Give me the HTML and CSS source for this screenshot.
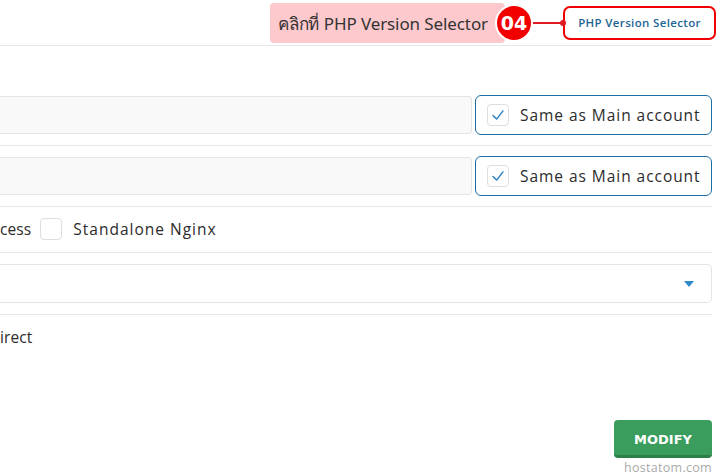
FILE: index.html
```html
<!DOCTYPE html>
<html lang="th">
<head>
<meta charset="utf-8">
<title>PHP Version Selector</title>
<link rel="stylesheet" href="styles.css">
</head>
<body>
<div class="page">
  <div class="header">
    <div class="note">คลิกที่ PHP Version Selector</div>
    <div class="step">04</div>
    <div class="connector"><span class="dot"></span></div>
    <button class="php-btn">PHP Version Selector</button>
  </div>

  <div class="form">
    <div class="row">
      <div class="field"></div>
      <label class="same">
        <span class="box checked"><svg viewBox="0 0 22 22" width="22" height="22"><path d="M5.5 11.5 L9.5 15.5 L16.5 6.5" fill="none" stroke="#2a7fbf" stroke-width="1.6" stroke-linecap="round" stroke-linejoin="round"/></svg></span>
        <span class="same-text">Same as Main account</span>
      </label>
    </div>
    <div class="row">
      <div class="field"></div>
      <label class="same">
        <span class="box checked"><svg viewBox="0 0 22 22" width="22" height="22"><path d="M5.5 11.5 L9.5 15.5 L16.5 6.5" fill="none" stroke="#2a7fbf" stroke-width="1.6" stroke-linecap="round" stroke-linejoin="round"/></svg></span>
        <span class="same-text">Same as Main account</span>
      </label>
    </div>
    <div class="row row-opts">
      <span class="label short">cess</span>
      <span class="box"></span>
      <span class="label">Standalone Nginx</span>
    </div>
    <div class="row row-select">
      <div class="select"><span class="caret"></span></div>
    </div>
    <div class="row row-last">
      <span class="label short">irect</span>
    </div>
  </div>

  <div class="actions">
    <button class="modify">MODIFY</button>
  </div>
  <div class="brand">hostatom.com</div>
</div>
</body>
</html>
```

FILE: styles.css
```css
html, body {
  margin: 0;
  padding: 0;
  background: #ffffff;
}
body {
  font-family: "Open Sans", "Noto Sans", "DejaVu Sans", sans-serif;
  color: #2b2b2b;
  width: 720px;
  height: 476px;
  overflow: hidden;
}
.page {
  width: 712px;
}
.header {
  height: 45px;
  border-bottom: 1px solid #e7e7e7;
  display: flex;
  align-items: center;
  justify-content: flex-end;
}
.note {
  height: 40px;
  margin-top: 1px;
  background: #fdc9cd;
  border-radius: 4px;
  padding: 0 17px 0 8px;
  display: flex;
  align-items: center;
  font-family: "Noto Sans", "DejaVu Sans", sans-serif;
  font-size: 17px;
  letter-spacing: -0.1px;
  color: #333;
}
.step {
  width: 34px;
  height: 34px;
  margin-left: -10px;
  border: 2px solid #ffffff;
  border-radius: 50%;
  background: #f20000;
  color: #fff;
  font-family: "DejaVu Sans", sans-serif;
  font-weight: bold;
  font-size: 19px;
  display: flex;
  align-items: center;
  justify-content: center;
  position: relative;
}
.connector {
  width: 30px;
  height: 2px;
  background: #e01b24;
  position: relative;
}
.dot {
  position: absolute;
  right: -3px;
  top: -2px;
  width: 6px;
  height: 6px;
  border-radius: 50%;
  background: #e01b24;
}
.php-btn {
  margin-right: -4px;
  width: 153px;
  height: 34px;
  border: 2px solid #f00000;
  border-radius: 7px;
  background: #fff;
  color: #1d6494;
  font-family: "Open Sans", sans-serif;
  font-size: 11.5px;
  letter-spacing: 0.35px;
  font-weight: 600;
  padding: 0;
}
.form {
  padding-top: 39px;
}
.row {
  display: flex;
  align-items: center;
  padding: 10px 0;
  border-bottom: 1px solid #e8e8e8;
}
.field {
  flex: 1;
  height: 36px;
  background: #f9f9f9;
  border: 1px solid #e4e4e4;
  border-left: none;
  border-radius: 0 4px 4px 0;
}
.same {
  margin-left: 3px;
  width: 237px;
  height: 40px;
  box-sizing: border-box;
  border: 1px solid #1c6ea4;
  border-radius: 6px;
  display: flex;
  align-items: center;
  padding-left: 11px;
}
.box {
  width: 20px;
  height: 20px;
  border: 1px solid #dedede;
  border-radius: 4px;
  background: #fff;
  display: inline-flex;
  align-items: center;
  justify-content: center;
  flex: none;
}
.box svg {
  display: block;
}
.same-text {
  margin-left: 11px;
  font-size: 15.5px;
  letter-spacing: 0.95px;
  color: #2b2b2b;
  white-space: nowrap;
}
.row-opts {
  padding: 10px 0 11px;
  height: 24px;
}
.label {
  font-size: 15.5px;
  letter-spacing: 1px;
  white-space: nowrap;
}
.label.short {
  letter-spacing: 0.1px;
}
.row-opts .box {
  margin: 0 11px 0 9px;
}
.row-select {
  padding: 11px 0;
}
.select {
  flex: 1;
  height: 37px;
  border: 1px solid #e4e4e4;
  border-left: none;
  border-radius: 0 5px 5px 0;
  background: #fff;
  display: flex;
  align-items: center;
  justify-content: flex-end;
  padding-right: 17px;
}
.caret {
  width: 0;
  height: 0;
  border-left: 5px solid transparent;
  border-right: 5px solid transparent;
  border-top: 6px solid #2e8bc9;
}
.row-last {
  border-bottom: none;
  height: 24px;
}
.actions {
  display: flex;
  justify-content: flex-end;
  margin-top: 61px;
}
.modify {
  width: 98px;
  height: 38px;
  background: #3a9d5d;
  border: none;
  border-bottom: 3px solid #2b7f48;
  border-radius: 4px;
  color: #fff;
  font-family: "DejaVu Sans", sans-serif;
  font-weight: bold;
  font-size: 13px;
  padding: 3px 0 0;
}
.brand {
  text-align: right;
  font-size: 12.5px;
  color: #aaaaaa;
  margin-top: 1px;
  letter-spacing: 0.3px;
}
```
